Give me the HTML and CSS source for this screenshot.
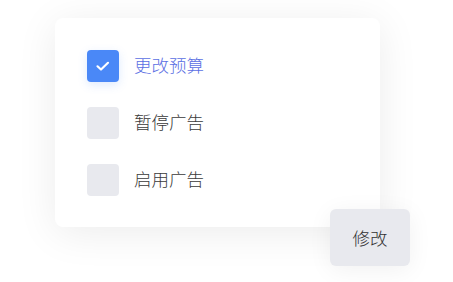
FILE: index.html
```html
<!DOCTYPE html>
<html lang="zh">
<head>
<meta charset="utf-8">
<link rel="stylesheet" href="styles.css">
</head>
<body>
<div class="stage">
  <div class="card">
    <label class="item">
      <span class="box checked">
        <svg width="16" height="16" viewBox="0 0 16 16"><path d="M2.5 8.3 L6 11.5 L13 4.8" fill="none" stroke="#fff" stroke-width="2.2" stroke-linecap="round" stroke-linejoin="round"/></svg>
      </span>
      <span class="label active">更改预算</span>
    </label>
    <label class="item">
      <span class="box"></span>
      <span class="label">暂停广告</span>
    </label>
    <label class="item">
      <span class="box"></span>
      <span class="label">启用广告</span>
    </label>
  </div>
  <button class="btn">修改</button>
</div>
</body>
</html>
```
FILE: styles.css
```css
html, body {
  margin: 0;
  padding: 0;
  background: #ffffff;
}
body {
  width: 453px;
  height: 282px;
  overflow: hidden;
  font-family: "Noto Sans CJK SC", "Noto Sans", sans-serif;
}
.stage {
  position: relative;
  padding: 18px 0 0 55px;
}
.card {
  width: 325px;
  height: 209px;
  box-sizing: border-box;
  background: #fff;
  border-radius: 8px;
  box-shadow: 0 6px 40px rgba(0, 0, 0, 0.08);
  padding: 32px 0 0 32px;
  display: flex;
  flex-direction: column;
  gap: 25px;
}
.item {
  display: flex;
  align-items: center;
  gap: 15px;
  height: 32px;
}
.box {
  width: 32px;
  height: 32px;
  border-radius: 4px;
  background: #e8e9ee;
  display: flex;
  align-items: center;
  justify-content: center;
}
.box.checked {
  background: #4a88f7;
  box-shadow: 0 3px 10px rgba(74, 136, 247, 0.18);
}
.label {
  font-size: 17.5px;
  font-weight: 300;
  color: #3a3a3a;
  line-height: 32px;
  position: relative;
  top: -1px;
}
.label.active {
  color: #5b6fe3;
}
.btn {
  position: absolute;
  left: 330px;
  top: 209px;
  width: 80px;
  height: 57px;
  border: none;
  border-radius: 6px;
  background: #e8e9ee;
  color: #333;
  font-family: "Noto Sans CJK SC", "Noto Sans", sans-serif;
  font-size: 17.5px;
  font-weight: 300;
  box-shadow: 0 4px 24px rgba(0, 0, 0, 0.06);
  padding: 0;
}
```
